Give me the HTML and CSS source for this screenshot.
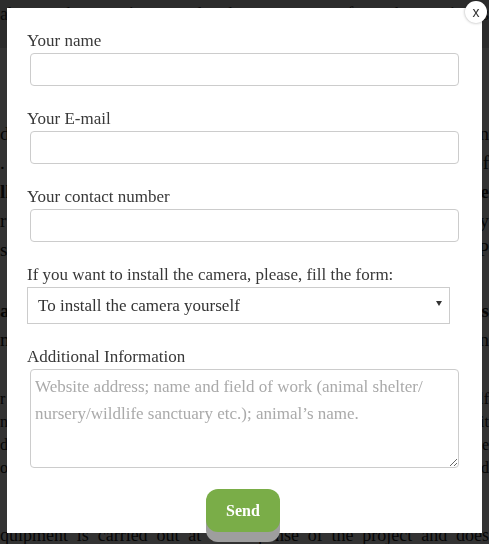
FILE: index.html
```html
<!DOCTYPE html>
<html lang="en">
<head>
  <meta charset="UTF-8">
  <meta name="viewport" content="width=device-width, initial-scale=1.0">
  <title>Install the camera</title>
  <link rel="stylesheet" href="styles.css">
</head>
<body>
  <div class="page">
    <header class="site-head">about the project and the cameras for the animals</header>
    <main class="article">
      <div class="ln ln-first">d the camera is placed in the enclosure of an</div>
      <div class="ln">. Anyone can watch the animals at any time of</div>
      <div class="ln ln-bold">ll conditions to take part are simple</div>
      <div class="ln">r shelters and nurseries are welcome to apply</div>
      <div class="ln">s well as private owners who want to share. P</div>
      <div class="ln ln-bold ln-gap">al information about the equipment is as</div>
      <div class="ln">m the camera works with a stable connection</div>
      <div class="small">
        <div class="ln-s ln-gap2">r the camera is installed by our team or by yourself</div>
        <div class="ln-s">n the stream is checked by the moderators before it</div>
        <div class="ln-s">d; the camera stays with the shelter for the whole</div>
        <div class="ln-s">or the owner may request the camera to be removed</div>
      </div>
      <div class="ln ln-last">quipment is carried out at the expense of the project and does</div>
    </main>
  </div>

  <div class="overlay"></div>

  <div class="modal">
    <button class="close" type="button">x</button>
    <form class="form">
      <div class="field">
        <label class="label">Your name</label>
        <input class="text" type="text">
      </div>
      <div class="field">
        <label class="label">Your E-mail</label>
        <input class="text" type="email">
      </div>
      <div class="field">
        <label class="label">Your contact number</label>
        <input class="text" type="tel">
      </div>
      <div class="field">
        <label class="label">If you want to install the camera, please, fill the form:</label>
        <div class="select-wrap">
          <select class="select">
            <option>To install the camera yourself</option>
            <option>To install the camera with our help</option>
          </select>
        </div>
      </div>
      <div class="field">
        <label class="label">Additional Information</label>
        <textarea class="text area" placeholder="Website address; name and field of work (animal shelter/&#10;nursery/wildlife sanctuary etc.); animal’s name."></textarea>
      </div>
      <button class="send" type="button">Send</button>
    </form>
  </div>
</body>
</html>
```

FILE: styles.css
```css
html, body {
  height: 100%;
}
body {
  margin: 0;
  overflow: hidden;
  background: #fff;
  color: #222;
  font-family: 'Liberation Serif', 'Times New Roman', serif;
}

/* page under the popup */
.site-head,
.ln,
.ln-s {
  text-align: justify;
  text-align-last: justify;
}
.site-head {
  height: 48px;
  line-height: 28px;
  background: #dcdcdc;
  font-size: 18px;
  color: #333;
}
.article {
  font-size: 19px;
  color: #222;
}
.ln {
  line-height: 29px;
}
.ln-first {
  margin-top: 71px;
}
.ln-bold {
  font-weight: bold;
}
.ln-gap {
  margin-top: 32px;
}
.small {
  font-size: 16px;
}
.ln-s {
  line-height: 23px;
}
.ln-gap2 {
  margin-top: 33px;
}
.ln-last {
  margin-top: 42px;
  font-size: 18px;
  white-space: nowrap;
}

.overlay {
  position: fixed;
  inset: 0;
  background: rgba(0, 0, 0, 0.8);
}

/* popup */
.modal {
  position: fixed;
  top: 8px;
  left: 7px;
  width: 475px;
  box-sizing: border-box;
  padding: 21px 23px 1px 20px;
  background: #fff;
}
.close {
  position: absolute;
  top: -7px;
  right: -5px;
  width: 22px;
  height: 22px;
  padding: 0;
  border: none;
  border-radius: 50%;
  background: #fff;
  box-shadow: 0 0 3px rgba(0, 0, 0, 0.35);
  font-family: 'Liberation Sans', Arial, sans-serif;
  font-size: 14px;
  line-height: 20px;
  color: #333;
  cursor: pointer;
}
.field {
  margin-bottom: 21px;
}
.label {
  display: block;
  font-size: 17px;
  line-height: 24px;
  color: #383838;
}
.text {
  display: block;
  box-sizing: border-box;
  width: calc(100% - 3px);
  height: 33px;
  margin: 0 0 0 3px;
  padding: 3px 4px;
  border: 1px solid #ccc;
  border-radius: 4px;
  font-family: inherit;
  font-size: 17px;
  color: #333;
  background: #fff;
}
.area {
  height: 99px;
  line-height: 27px;
  resize: both;
}
.area::placeholder {
  color: #aaa;
}
.select-wrap {
  position: relative;
  width: 423px;
}
.select-wrap::after {
  content: "";
  position: absolute;
  right: 8px;
  top: 14px;
  border-left: 3px solid transparent;
  border-right: 3px solid transparent;
  border-top: 5px solid #333;
  pointer-events: none;
}
.select {
  display: block;
  width: 100%;
  height: 37px;
  box-sizing: border-box;
  padding: 0 24px 0 10px;
  border: 1px solid #ccc;
  border-radius: 0;
  background: #fff;
  appearance: none;
  -webkit-appearance: none;
  font-family: inherit;
  font-size: 17px;
  color: #333;
}
.send {
  display: block;
  width: 74px;
  height: 43px;
  margin: 0 auto;
  padding: 0;
  border: none;
  border-radius: 12px;
  background: #7aad48;
  box-shadow: 0 10px 0 #9e9e9e;
  font-family: inherit;
  font-size: 16px;
  font-weight: bold;
  color: #fff;
  cursor: pointer;
}
```
